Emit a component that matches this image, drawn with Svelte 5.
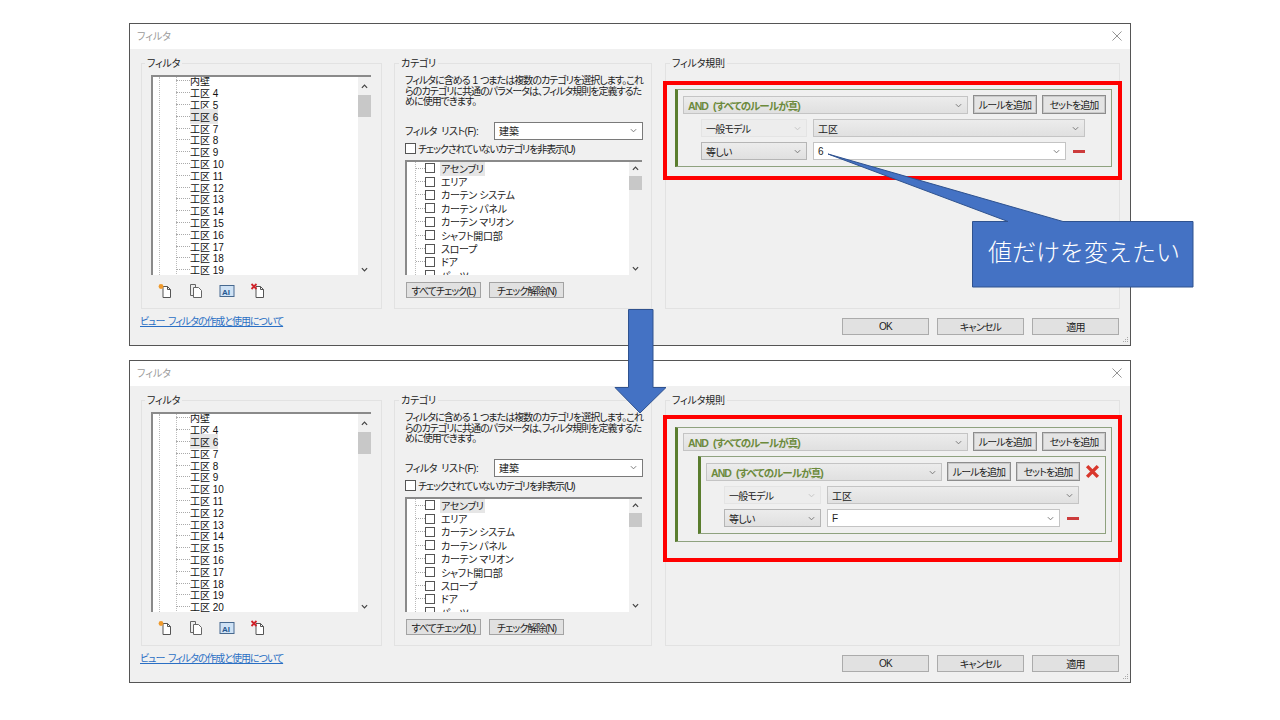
<script>
  const tail = [7, 8, 9, 10, 11, 12, 13, 14, 15, 16, 17, 18, 19];
  const firstFilters = ["内壁", "工区 4", "工区 5", "工区 6", ...tail.map((n) => `工区 ${n}`)];
  const secondFilters = ["内壁", "工区 4", "工区 6", ...tail.map((n) => `工区 ${n}`), "工区 20"];
  const categories = [
    "アセンブリ",
    "エリア",
    "カーテン システム",
    "カーテン パネル",
    "カーテン マリオン",
    "シャフト開口部",
    "スロープ",
    "ドア",
    "パーツ"
  ];
</script>

{#snippet chevron(kind = "")}
  <svg class="chevron {kind}" viewBox="0 0 8 5" aria-hidden="true">
    <path d="M1 1l3 3 3-3" fill="none" stroke="currentColor" stroke-width="1.1" />
  </svg>
{/snippet}

{#snippet scrollbar(size)}
  <div class="scrollbar {size}">
    <div class="arrow">
      <svg viewBox="0 0 8 5" aria-hidden="true"><path d="M1 4l3-3 3 3" fill="none" stroke="#444" stroke-width="1.4" /></svg>
    </div>
    <div class="thumb"></div>
    <div class="arrow bottom">
      <svg viewBox="0 0 8 5" aria-hidden="true"><path d="M1 1l3 3 3-3" fill="none" stroke="#444" stroke-width="1.4" /></svg>
    </div>
  </div>
{/snippet}

{#snippet head()}
  <div class="select set-select">
    <span class="and">AND (すべてのルールが真)</span>
    {@render chevron()}
  </div>
  <button class="rule-btn">ルールを追加</button>
  <button class="rule-btn">セットを追加</button>
{/snippet}

{#snippet condition(value)}
  <div class="row">
    <div class="select cond off"><span>一般モデル</span>{@render chevron("faint")}</div>
    <div class="select grow"><span>工区</span>{@render chevron()}</div>
  </div>
  <div class="row">
    <div class="select cond"><span>等しい</span>{@render chevron()}</div>
    <div class="select grow value"><span>{value}</span>{@render chevron()}</div>
    <span class="minus"></span>
  </div>
{/snippet}

{#snippet dialog(filters, nested)}
  <section class="dialog" class:nested>
    <header class="titlebar">
      <span>フィルタ</span>
      <svg class="close" viewBox="0 0 11 11" aria-hidden="true">
        <path d="M.5.5l10 10M10.5.5l-10 10" stroke="#8a8a8a" stroke-width="1" fill="none" />
      </svg>
    </header>

    <div class="body">
      <div class="group filters">
        <span class="legend">フィルタ</span>
        <div class="tree">
          <div class="tree-guide">
            <div class="tree-list">
              {#each filters as name}
                <div class="tree-row">
                  <i></i><span class:picked={name === "工区 6"}>{name}</span>
                </div>
              {/each}
            </div>
          </div>
          {@render scrollbar("long")}
        </div>
        <div class="tools">
          <svg viewBox="0 0 16 16" aria-hidden="true">
            <path d="M6 3.5h4.500l3 3v8H6z" fill="#fff" stroke="#555" />
            <path d="M10.500 3.500v3h3" fill="none" stroke="#555" />
            <circle cx="4" cy="3.500" r="2.400" fill="#ef9a2d" />
          </svg>
          <svg viewBox="0 0 16 16" aria-hidden="true">
            <path d="M2.500 1.500h5v11h-5z" fill="#eee" stroke="#666" />
            <path d="M5.500 4.500h5l3 3v7h-8z" fill="#fff" stroke="#666" />
          </svg>
          <svg viewBox="0 0 16 16" aria-hidden="true">
            <rect x="1" y="2.500" width="14" height="11" fill="#cfe2f5" stroke="#47698f" />
            <text x="3" y="11.500" class="ai">AI</text>
          </svg>
          <svg viewBox="0 0 16 16" aria-hidden="true">
            <path d="M6 3.5h4.500l3 3v8H6z" fill="#fff" stroke="#555" />
            <path d="M10.500 3.500v3h3" fill="none" stroke="#555" />
            <path d="M1.500 1l5 5M6.500 1l-5 5" stroke="#d0232a" stroke-width="1.800" />
          </svg>
        </div>
      </div>

      <div class="group cats">
        <span class="legend">カテゴリ</span>
        <p class="desc">
          フィルタに含める 1 つまたは複数のカテゴリを選択します。これ<br />
          らのカテゴリに共通のパラメータは、フィルタ規則を定義するた<br />
          めに使用できます。
        </p>
        <div class="list-pick">
          <span class="pick-label">フィルタ リスト(F):</span>
          <div class="select pick"><span>建築</span>{@render chevron()}</div>
        </div>
        <label class="hide-row"><span class="box"></span><span>チェックされていないカテゴリを非表示(U)</span></label>
        <div class="catlist">
          <div class="cat-guide">
            {#each categories as cat, i}
              <div class="cat-row">
                <i></i><span class="box"></span><span class="cat-name" class:picked={i === 0}>{cat}</span>
              </div>
            {/each}
          </div>
          {@render scrollbar("short")}
        </div>
        <div class="check-btns">
          <button class="plain">すべてチェック(L)</button>
          <button class="plain">チェック解除(N)</button>
        </div>
      </div>

      <div class="group rules">
        <span class="legend">フィルタ規則</span>
        <div class="redbox">
          <div class="ruleset">
            {#if nested}
              <div class="set-head">{@render head()}</div>
              <div class="ruleset inner">
                <div class="set-head">
                  {@render head()}
                  <svg class="remove" viewBox="0 0 14 14" aria-hidden="true">
                    <path d="M2 2l10 10M12 2L2 12" stroke="#d9372c" stroke-width="3.200" />
                  </svg>
                </div>
                {@render condition("F")}
              </div>
            {:else}
              <div class="set-head">{@render head()}</div>
              {@render condition("6")}
            {/if}
          </div>
        </div>
      </div>
    </div>

    <footer class="footer">
      <a href="#help" class="help">ビュー フィルタの作成と使用について</a>
      <div class="actions">
        <button class="action">OK</button>
        <button class="action">キャンセル</button>
        <button class="action">適用</button>
      </div>
    </footer>

    <svg class="grip" viewBox="0 0 8 8" aria-hidden="true">
      <path d="M6 1h1v1H6zM4 3h1v1H4zM6 3h1v1H6zM2 5h1v1H2zM4 5h1v1H4zM6 5h1v1H6z" fill="#aaa" />
    </svg>
  </section>
{/snippet}

<main class="page">
  {@render dialog(firstFilters, false)}
  {@render dialog(secondFilters, true)}

  <!-- slide annotations on top of the two dialogs -->
  <svg class="notes" viewBox="0 0 1280 720" aria-hidden="true">
    <path d="M628.500 309.500h24.500v78h13l-26 25.500-25-25.500h13.500z" fill="#4472c4" stroke="#2f528f" />
    <path d="M972.500 221.500H1008L828 154l235 67.500h130v65.500H972.500z" fill="#4472c4" stroke="#2f528f" />
    <text x="988" y="260.500" class="callout">値だけを変えたい</text>
  </svg>
</main>

<style>
  :global(body) {
    background: #fff;
    font-family: "Liberation Sans", "Noto Sans CJK JP", sans-serif;
  }

  .page {
    position: relative;
    width: 1280px;
    height: 720px;
    padding: 23px 0 0 129px;
    box-sizing: border-box;
    display: flex;
    flex-direction: column;
    gap: 14px;
    overflow: hidden;
    font-size: 10px;
    color: #222;
    font-feature-settings: "palt";
  }

  .notes {
    position: absolute;
    inset: 0;
    width: 1280px;
    height: 720px;
    pointer-events: none;
  }

  .callout {
    font-family: "Noto Sans CJK JP", sans-serif;
    font-weight: 300;
    font-size: 24px;
    fill: #fff;
    font-feature-settings: normal;
  }

  .dialog {
    position: relative;
    width: 1002px;
    height: 323px;
    box-sizing: border-box;
    border: 1px solid #555;
    background: #f0f0f0;
    display: flex;
    flex-direction: column;
  }

  .titlebar {
    height: 25px;
    flex-shrink: 0;
    background: #fff;
    display: flex;
    align-items: center;
    justify-content: space-between;
    padding: 0 8px 2px 7px;
    box-sizing: border-box;
    color: #9a9a9a;
  }

  .close {
    width: 10px;
    height: 10px;
  }

  .body {
    display: flex;
    padding: 14px 0 0 11px;
    gap: 12px;
  }

  .group {
    position: relative;
    height: 246px;
    box-sizing: border-box;
    border: 1px solid #e2e2e2;
  }

  .legend {
    position: absolute;
    top: -6px;
    left: 3px;
    padding: 0 2px;
    background: #f0f0f0;
    line-height: 12px;
    letter-spacing: -0.2px;
  }

  .cats .legend,
  .rules .legend {
    left: 4px;
  }

  .filters {
    width: 241px;
    padding: 11px 0 0 9px;
  }

  .cats {
    width: 258px;
    padding: 12px 0 0 10px;
  }

  .rules {
    width: 455px;
    margin-left: 1px;
    padding-top: 17px;
  }

  .nested .rules {
    padding-top: 14px;
  }

  .tree {
    width: 220px;
    height: 200px;
    box-sizing: border-box;
    background: #fff;
    border-top: 2px solid #8a8a8a;
    border-left: 2px solid #8a8a8a;
    display: flex;
    overflow: hidden;
  }

  .tree-guide {
    flex: 1;
    padding-left: 6px;
  }

  .tree-list {
    height: 100%;
    padding-left: 16px;
    border-left: 1px dotted #bbb;
    background-image: linear-gradient(#bbb 50%, transparent 50%);
    background-size: 1px 2px;
    background-repeat: repeat-y;
    background-position: 16px 0;
  }

  .tree-row {
    height: 11.800px;
    display: flex;
    align-items: center;
    position: relative;
    top: -2px;
    white-space: nowrap;
    color: #111;
  }

  .tree-row i {
    width: 14px;
    border-top: 1px dotted #aaa;
    flex-shrink: 0;
  }

  .picked {
    background: #e6e6e6;
  }

  .scrollbar {
    width: 13px;
    flex-shrink: 0;
    background: #f0f0f0;
    display: flex;
    flex-direction: column;
  }

  .scrollbar .arrow {
    height: 18px;
    display: flex;
    align-items: center;
    justify-content: center;
    flex-shrink: 0;
  }

  .scrollbar .arrow svg {
    width: 7px;
    height: 5px;
  }

  .thumb {
    height: 22px;
    background: #c8c8c8;
  }

  .scrollbar.short .arrow {
    height: 14px;
  }

  .scrollbar.short .thumb {
    height: 14px;
  }

  .scrollbar .arrow.bottom {
    margin-top: auto;
    height: 12px;
  }

  .tools {
    display: flex;
    gap: 15px;
    margin: 8px 0 0 6px;
  }

  .tools svg {
    width: 16px;
    height: 16px;
  }

  .ai {
    font-size: 8px;
    font-weight: 700;
    fill: #27598f;
  }

  .desc {
    margin: 0;
    line-height: 10.500px;
    width: 240px;
    white-space: nowrap;
    letter-spacing: -0.97px;
    word-spacing: 1px;
  }

  .list-pick {
    display: flex;
    align-items: center;
    margin-top: 14px;
  }

  .pick-label {
    width: 89px;
    letter-spacing: -0.5px;
    word-spacing: 2px;
  }

  .select {
    display: flex;
    align-items: center;
    justify-content: space-between;
    box-sizing: border-box;
    height: 18px;
    padding: 0 5px 0 4px;
    border: 1px solid #c4c4c4;
    background: linear-gradient(#ececec, #e0e0e0);
    white-space: nowrap;
  }

  .pick {
    width: 149px;
    background: #fff;
    border-color: #7a7a7a;
  }

  .hide-row {
    display: flex;
    align-items: center;
    gap: 2px;
    height: 12px;
    margin-top: 3px;
    letter-spacing: -1.1px;
  }

  .box {
    width: 10px;
    height: 10px;
    border: 1px solid #555;
    background: #fff;
    box-sizing: border-box;
    flex-shrink: 0;
  }

  .hide-row .box {
    width: 11px;
    height: 11px;
  }

  .catlist {
    width: 237px;
    height: 115px;
    margin-top: 5px;
    box-sizing: border-box;
    background: #fff;
    border-top: 2px solid #8a8a8a;
    border-left: 2px solid #8a8a8a;
    display: flex;
    overflow: hidden;
  }

  .cat-guide {
    flex: 1;
    margin-left: 8px;
    border-left: 1px dotted #bbb;
  }

  .cat-row {
    height: 13.400px;
    display: flex;
    align-items: center;
    white-space: nowrap;
  }

  .cat-row i {
    width: 9px;
    border-top: 1px dotted #aaa;
  }

  .cat-name {
    margin-left: 5px;
    padding: 0 1px;
    letter-spacing: -0.3px;
  }

  .check-btns {
    display: flex;
    gap: 8px;
    margin: 7px 0 0 1px;
  }

  button {
    font: inherit;
    color: #222;
    padding: 0;
    white-space: nowrap;
  }

  .plain {
    width: 75px;
    height: 16px;
    background: #e1e1e1;
    border: 1px solid #a3a3a3;
    letter-spacing: -1px;
  }

  .redbox {
    margin: 0 -3px;
    box-sizing: border-box;
    border: 4px solid #f00;
    padding: 4px 6px 9px 8px;
  }

  .nested .redbox {
    padding: 8px 6px 16px 8px;
  }

  .ruleset {
    border: 1px solid #8fa27f;
    border-left: 3px solid #5a7d2e;
    padding: 6px 5px;
  }

  .nested .redbox > .ruleset {
    padding: 5px 5px 7px;
  }

  .ruleset.inner {
    margin: 5px 0 0 15px;
  }

  .set-head {
    display: flex;
    align-items: flex-start;
    gap: 5px;
    height: 18px;
  }

  .set-select {
    flex: 1;
  }

  .and {
    color: #6c8a3c;
    font-weight: 700;
    font-size: 10.500px;
    letter-spacing: -0.9px;
    word-spacing: 3px;
  }

  .rule-btn {
    width: 64px;
    height: 19px;
    margin-top: -1px;
    flex-shrink: 0;
    background: #e4e4e4;
    border: 1px solid #8d8d8d;
    box-shadow: inset 0 0 0 1px #c9c9c9;
    letter-spacing: -0.9px;
  }

  .remove {
    width: 15px;
    height: 15px;
    flex-shrink: 0;
    margin-top: 1px;
  }

  .row {
    display: flex;
    align-items: center;
    gap: 6px;
    margin: 5px 21px 0 18px;
  }

  .cond {
    width: 106px;
    flex-shrink: 0;
    border-color: #b5b5b5;
    letter-spacing: -0.8px;
  }

  .inner .cond {
    width: 97px;
  }

  .cond.off {
    background: #ededed;
    border-color: #e4e4e4;
  }

  .grow {
    flex: 1;
  }

  .value {
    background: #fff;
  }

  .minus {
    width: 12px;
    height: 3px;
    margin-left: 1px;
    background: #cc3b3b;
    flex-shrink: 0;
  }

  .chevron {
    width: 7px;
    height: 5px;
    color: #777;
    flex-shrink: 0;
  }

  .chevron.faint {
    color: #c4c4c4;
  }

  .footer {
    display: flex;
    align-items: flex-start;
    justify-content: space-between;
    padding: 9px 11px 0 10px;
  }

  .help {
    color: #2a6fc4;
    text-decoration: underline;
    line-height: 12px;
    margin-top: -2px;
    letter-spacing: -1.05px;
    word-spacing: 2px;
  }

  .actions {
    display: flex;
    gap: 8px;
  }

  .action {
    width: 87px;
    height: 17px;
    background: #e1e1e1;
    border: 1px solid #ababab;
    letter-spacing: -0.8px;
  }

  .grip {
    position: absolute;
    right: 1px;
    bottom: 1px;
    width: 8px;
    height: 8px;
  }
</style>
